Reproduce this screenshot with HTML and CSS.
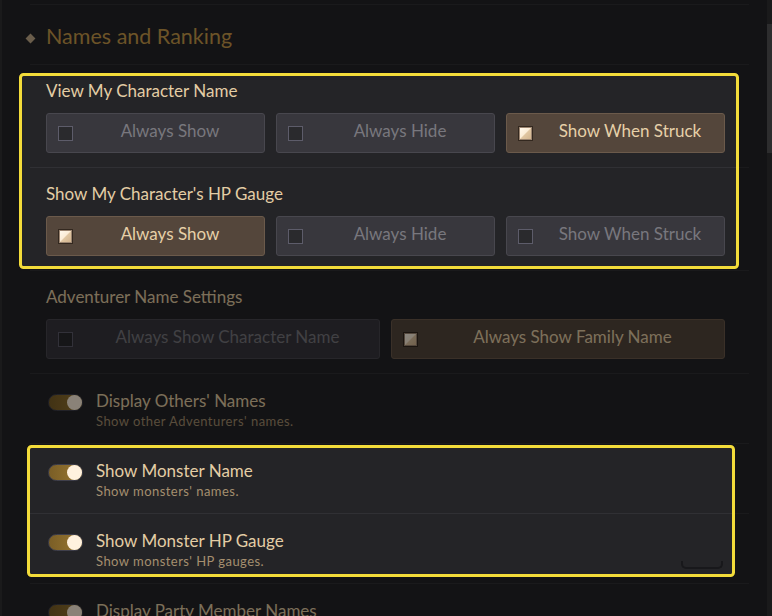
FILE: index.html
```html
<!DOCTYPE html>
<html lang="en">
<head>
    <meta charset="UTF-8">
    <meta name="viewport" content="width=device-width, initial-scale=1.0">
    <title>Names and Ranking</title>
    <link rel="stylesheet" href="styles.css">
</head>
<body>

<div class="page">
    <main class="settings">
        <h2 class="section-title"><span class="diamond"></span>Names and Ranking</h2>

        <div class="opt-row">
            <div class="opt-label">View My Character Name</div>
            <div class="choices">
                <div class="choice"><span class="check"></span><span class="choice-text">Always Show</span></div>
                <div class="choice"><span class="check"></span><span class="choice-text">Always Hide</span></div>
                <div class="choice on"><span class="check on"></span><span class="choice-text">Show When Struck</span></div>
            </div>
        </div>

        <div class="opt-row">
            <div class="opt-label">Show My Character's HP Gauge</div>
            <div class="choices">
                <div class="choice on"><span class="check on"></span><span class="choice-text">Always Show</span></div>
                <div class="choice"><span class="check"></span><span class="choice-text">Always Hide</span></div>
                <div class="choice"><span class="check"></span><span class="choice-text">Show When Struck</span></div>
            </div>
        </div>

        <div class="opt-row">
            <div class="opt-label">Adventurer Name Settings</div>
            <div class="choices two">
                <div class="choice"><span class="check"></span><span class="choice-text">Always Show Character Name</span></div>
                <div class="choice on"><span class="check on"></span><span class="choice-text">Always Show Family Name</span></div>
            </div>
        </div>

        <div class="toggle-row">
            <span class="toggle"><span class="knob"></span></span>
            <div class="toggle-text">
                <div class="toggle-title">Display Others' Names</div>
                <div class="toggle-desc">Show other Adventurers' names.</div>
            </div>
        </div>

        <div class="toggle-row">
            <span class="toggle"><span class="knob"></span></span>
            <div class="toggle-text">
                <div class="toggle-title">Show Monster Name</div>
                <div class="toggle-desc">Show monsters' names.</div>
            </div>
        </div>

        <div class="toggle-row">
            <span class="toggle"><span class="knob"></span></span>
            <div class="toggle-text">
                <div class="toggle-title">Show Monster HP Gauge</div>
                <div class="toggle-desc">Show monsters' HP gauges.</div>
            </div>
            <span class="hint-edge"></span>
        </div>

        <div class="toggle-row">
            <span class="toggle"><span class="knob"></span></span>
            <div class="toggle-text">
                <div class="toggle-title">Display Party Member Names</div>
                <div class="toggle-desc">Show party members' names.</div>
            </div>
        </div>
    </main>

    <div class="scrollbar"><div class="thumb"></div></div>
</div>

<!-- tutorial spotlight: dims everything except the two highlighted groups -->
<svg class="spotlight" width="772" height="616" viewBox="0 0 772 616">
    <defs>
        <mask id="holes">
            <rect width="772" height="616" fill="#fff"/>
            <rect x="20.5" y="74.5" width="717" height="193" rx="3" fill="#000"/>
            <rect x="28.5" y="446.5" width="705" height="129" rx="3" fill="#000"/>
        </mask>
    </defs>
    <rect width="772" height="616" fill="#000" fill-opacity="0.46" mask="url(#holes)"/>
    <rect x="20.5" y="74.5" width="717" height="193" rx="3" fill="none" stroke="#f3dc3a" stroke-width="3"/>
    <rect x="28.5" y="446.5" width="705" height="129" rx="3" fill="none" stroke="#f3dc3a" stroke-width="3"/>
</svg>

</body>
</html>
```

FILE: styles.css
```css
/* Global Styles */
* {
    margin: 0;
    padding: 0;
    box-sizing: border-box;
}

body {
    font-family: 'Lato', 'Open Sans', sans-serif;
    background-color: #242427;
    width: 772px;
    height: 616px;
    overflow: hidden;
}

.page {
    display: flex;
    height: 616px;
    overflow: hidden;
    border-left: 2px solid #303033;
}

.settings {
    width: 719px;
    margin-left: 28px;
    padding-top: 4px;
}

/* Section header */
.section-title {
    display: flex;
    align-items: center;
    height: 61px;
    padding-top: 3px;
    border-top: 1px solid #303034;
    border-bottom: 1px solid #303034;
    font-size: 21.5px;
    font-weight: 400;
    color: #c89b4a;
}

.diamond {
    flex: none;
    width: 7px;
    height: 7px;
    margin: 4px 12px 0 -3px;
    background: #c4ad8b;
    transform: rotate(45deg);
}

/* Option rows with choice buttons */
.opt-row {
    padding: 16px 24px 14px 16px;
    border-bottom: 1px solid #303034;
}

.opt-label {
    font-size: 17px;
    line-height: 20px;
    color: #e3cda5;
    margin-bottom: 12px;
}

.choices {
    display: grid;
    grid-template-columns: repeat(3, 1fr);
    gap: 11px;
}

.choices.two {
    grid-template-columns: repeat(2, 1fr);
}

.choice {
    display: flex;
    align-items: center;
    height: 40px;
    padding-left: 11px;
    background: #38373d;
    border: 1px solid #48474e;
    border-radius: 3px;
    color: #78777e;
    font-size: 17px;
}

.choice.on {
    background: #54463b;
    border-color: #6b5a4b;
    color: #e6d0a8;
}

.choice-text {
    flex: 1;
    text-align: center;
    padding-left: 3px;
    line-height: 20px;
    margin-bottom: 5px;
    white-space: nowrap;
}

.check {
    flex: none;
    width: 15px;
    height: 15px;
    border: 1px solid #5d5c6a;
    background: #2a2a2d;
}

.check.on {
    border-color: #33281f;
    background: linear-gradient(135deg, #fffaf0 0%, #fbecd6 48%, #e0c6a2 52%, #cfb08a 100%);
    box-shadow: inset 0 0 0 1px #9a8470;
}

/* Toggle rows */
.toggle-row {
    display: flex;
    height: 70px;
    padding: 0 26px 0 18px;
    border-bottom: 1px solid #303034;
}

.toggle {
    flex: none;
    display: flex;
    align-items: center;
    justify-content: flex-end;
    width: 35px;
    height: 17px;
    margin: 20px 13px 0 0;
    border: 1px solid #3f3f4b;
    border-radius: 9px;
    background: linear-gradient(90deg, #7a5e26, #9a7832);
}

.knob {
    width: 15px;
    height: 15px;
    border-radius: 50%;
    background: #fff1de;
}

.toggle-text {
    padding-top: 17px;
}

.toggle-title {
    font-size: 17px;
    line-height: 20px;
    color: #e3cda5;
}

.toggle-desc {
    margin-top: 2px;
    font-size: 13px;
    line-height: 16px;
    letter-spacing: 0.45px;
    color: #a58f6f;
}

.hint-edge {
    align-self: flex-end;
    width: 42px;
    height: 8px;
    margin: 0 0 14px auto;
    border: 2px solid #18181b;
    border-top: none;
    border-radius: 0 0 5px 5px;
}

/* Scrollbar */
.scrollbar {
    flex: none;
    width: 5px;
    margin-left: auto;
    background: #303033;
}

.thumb {
    margin-top: 24px;
    height: 129px;
    background: #545456;
}

/* Tutorial overlay */
.spotlight {
    position: absolute;
    top: 0;
    left: 0;
    pointer-events: none;
}
```
